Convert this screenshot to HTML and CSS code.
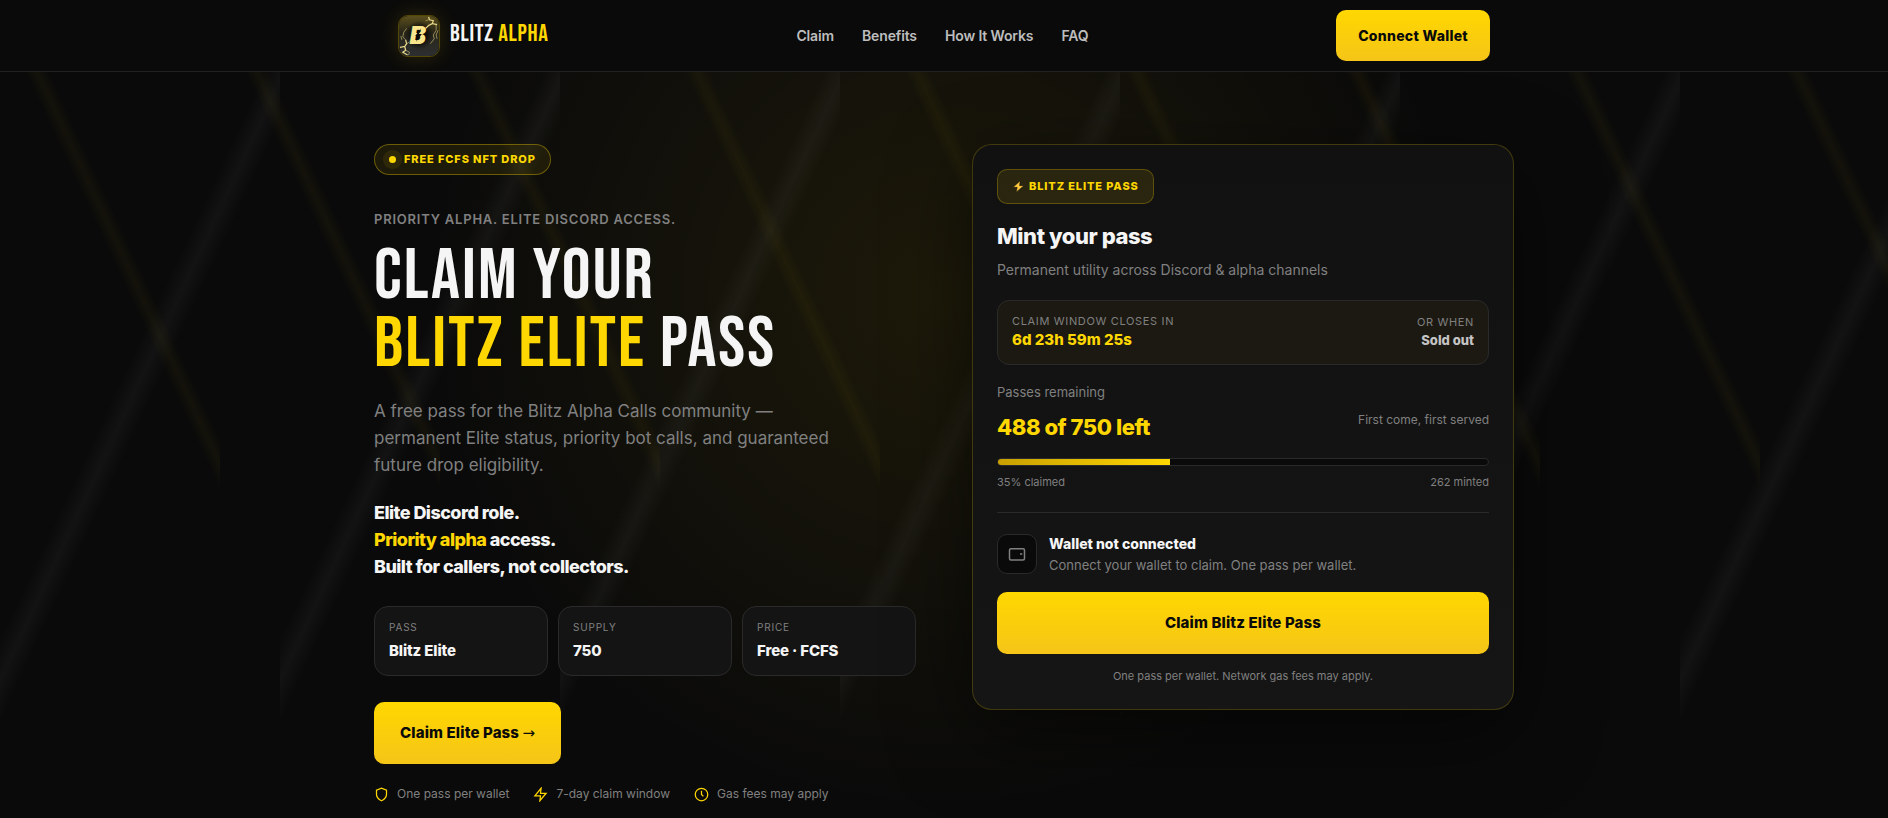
FILE: index.html
```html
<!DOCTYPE html>
<html lang="en">
<head>
    <meta charset="UTF-8">
    <meta name="viewport" content="width=device-width, initial-scale=1.0">
    <title>Blitz Alpha</title>
    <link rel="stylesheet" href="styles.css">
</head>
<body>
    <header class="site-header">
        <div class="header-inner">
            <a href="#" class="brand">
                <svg class="brand-logo" viewBox="0 0 42 42" aria-hidden="true">
                    <defs>
                        <linearGradient id="logoBg" x1="0" y1="0" x2="0" y2="1">
                            <stop offset="0" stop-color="#5a4f1c"/>
                            <stop offset="0.4" stop-color="#2a2719"/>
                            <stop offset="1" stop-color="#2c2e30"/>
                        </linearGradient>
                        <radialGradient id="logoShade">
                            <stop offset="0.4" stop-color="#080808"/>
                            <stop offset="1" stop-color="#080808" stop-opacity="0"/>
                        </radialGradient>
                    </defs>
                    <rect width="42" height="42" fill="url(#logoBg)"/>
                    <circle cx="21" cy="20" r="15" fill="url(#logoShade)"/>
                    <g fill="none" stroke="#e8d98a" stroke-width="0.8">
                        <path stroke-width="1.3" d="M31 1l1 3 4 1-1 3 5 1M35 8l-4 2-3 3"/>
                        <path opacity="0.7" d="M39 9v6l-3 5 1 4-4 5M41 15l-2 5 1 4M31 4l-3 1"/>
                        <path stroke-width="1.3" d="M1 33l5-1 1 4-3 2 5 3M6 32l2-3-1-4"/>
                        <path opacity="0.7" d="M7 25l-3-3 1-5 3-4M7 30l4-3M3 25l-1-4M7 36l4 2-1 3"/>
                    </g>
                    <text x="11" y="29" class="logo-letter">B</text>
                    <path d="M23 13l-6 8h3l-2 6 6-8h-3z" fill="#0b0b0b"/>
                </svg>
                <span class="brand-name">BLITZ <span class="gold">ALPHA</span></span>
            </a>
            <nav class="nav">
                <a href="#claim">Claim</a>
                <a href="#benefits">Benefits</a>
                <a href="#how">How It Works</a>
                <a href="#faq">FAQ</a>
            </nav>
            <button class="btn btn-small" type="button">Connect Wallet</button>
        </div>
    </header>

    <main class="hero">
        <section class="intro">
            <div class="badge"><span class="badge-dot"></span>FREE FCFS NFT DROP</div>
            <p class="eyebrow">PRIORITY ALPHA. ELITE DISCORD ACCESS.</p>
            <h1>CLAIM YOUR<br><span class="gold">BLITZ ELITE</span> PASS</h1>
            <p class="lead">A free pass for the Blitz Alpha Calls community — permanent Elite status, priority bot calls, and guaranteed future drop eligibility.</p>
            <p class="tagline">Elite Discord role.<br><span class="gold">Priority alpha</span> access.<br>Built for callers, not collectors.</p>

            <dl class="stats">
                <div class="stat">
                    <dt>PASS</dt>
                    <dd>Blitz Elite</dd>
                </div>
                <div class="stat">
                    <dt>SUPPLY</dt>
                    <dd>750</dd>
                </div>
                <div class="stat">
                    <dt>PRICE</dt>
                    <dd>Free · FCFS</dd>
                </div>
            </dl>

            <a href="#claim" class="btn btn-large">Claim Elite Pass <span class="arrow">→</span></a>

            <ul class="trust">
                <li>
                    <svg viewBox="0 0 24 24"><path d="M12 22s8-4 8-10V5l-8-3-8 3v7c0 6 8 10 8 10z"/></svg>
                    One pass per wallet
                </li>
                <li>
                    <svg viewBox="0 0 24 24"><path d="M13 2L3 14h9l-1 8 10-12h-9l1-8z"/></svg>
                    7-day claim window
                </li>
                <li>
                    <svg viewBox="0 0 24 24"><circle cx="12" cy="12" r="10"/><path d="M12 6v6l3 3"/></svg>
                    Gas fees may apply
                </li>
            </ul>
        </section>

        <section class="mint-card" id="claim">
            <div class="pass-badge">
                <svg viewBox="0 0 12 12"><path d="M7.500.8L1 6.800h3.800L3.800 11.200 11 5.200H7z"/></svg>
                BLITZ ELITE PASS
            </div>
            <h2>Mint your pass</h2>
            <p class="mint-sub">Permanent utility across Discord &amp; alpha channels</p>

            <div class="timer">
                <div>
                    <div class="timer-label">CLAIM WINDOW CLOSES IN</div>
                    <div class="timer-value gold">6d 23h 59m 25s</div>
                </div>
                <div class="timer-end">
                    <div class="timer-label">OR WHEN</div>
                    <div class="timer-sold">Sold out</div>
                </div>
            </div>

            <div class="supply-label">Passes remaining</div>
            <div class="supply-row">
                <strong class="gold">488 of 750 left</strong>
                <span>First come, first served</span>
            </div>
            <div class="progress"><div class="progress-fill" style="width: 35%"></div></div>
            <div class="progress-meta">
                <span>35% claimed</span>
                <span>262 minted</span>
            </div>

            <div class="wallet">
                <div class="wallet-icon">
                    <svg viewBox="0 0 24 24"><rect x="2" y="5" width="20" height="15" rx="2"/><path d="M16 12h3"/></svg>
                </div>
                <div>
                    <div class="wallet-title">Wallet not connected</div>
                    <div class="wallet-text">Connect your wallet to claim. One pass per wallet.</div>
                </div>
            </div>

            <button class="btn btn-large btn-block" type="button">Claim Blitz Elite Pass</button>
            <p class="fine-print">One pass per wallet. Network gas fees may apply.</p>
        </section>
    </main>
</body>
</html>
```
FILE: styles.css
```css
* {
    box-sizing: border-box;
    margin: 0;
    padding: 0;
}
body {
    min-height: 100vh;
    font-family: Inter, "Liberation Sans", sans-serif;
    font-size: 14px;
    line-height: 20px;
    color: #f5f5f5;
    background-color: #0a0a0a;
    background-image:
        linear-gradient(115deg, transparent 45%, rgba(255, 255, 255, 0.035) 48%, transparent 51%),
        linear-gradient(65deg, transparent 62%, rgba(255, 215, 0, 0.04) 64%, transparent 66%),
        radial-gradient(circle 520px at 50% 36%, rgba(255, 215, 0, 0.08), transparent);
    background-size: 280px 100vh, 220px 100vh, 100% 100vh;
}
a {
    color: inherit;
    text-decoration: none;
}
.gold {
    color: #ffd700;
}

/* Header */
.site-header {
    border-bottom: 1px solid #222;
    background: rgba(10, 10, 10, 0.97);
}
.header-inner {
    max-width: 1140px;
    margin: 0 auto;
    padding: 10px 24px;
    display: flex;
    align-items: center;
    justify-content: space-between;
}
.brand {
    display: flex;
    align-items: center;
    gap: 10px;
}
.brand-logo {
    width: 42px;
    height: 42px;
    border: 1px solid rgba(255, 215, 0, 0.3);
    border-radius: 10px;
    box-shadow: 0 0 20px rgba(255, 215, 0, 0.15);
}
.logo-letter {
    font: italic 900 26px Inter, sans-serif;
    fill: #f8e58c;
}
.brand-name {
    padding-bottom: 4px;
    font-family: "Bebas Neue", "Liberation Sans", sans-serif;
    font-size: 24px;
    line-height: 24px;
    letter-spacing: 0.03em;
}
.nav {
    display: flex;
    gap: 28px;
    font-weight: 600;
    letter-spacing: -0.01em;
    color: #bdbdbd;
}
.btn {
    display: inline-block;
    border: 0;
    border-radius: 10px;
    background: linear-gradient(#ffd700, #f5c518);
    color: #0a0a0a;
    font-family: inherit;
    font-weight: 800;
    text-align: center;
    cursor: pointer;
}
.btn-small {
    padding: 15px 22px;
    font-size: 14px;
    line-height: 21px;
    letter-spacing: 0.02em;
}
.btn-large {
    padding: 19px 26px;
    font-size: 15px;
    line-height: 24px;
    letter-spacing: 0.01em;
}
.btn-block {
    width: 100%;
}
.arrow {
    font-family: "DejaVu Sans", sans-serif;
    font-weight: 400;
}

/* Hero */
.hero {
    max-width: 1188px;
    margin: 0 auto;
    padding: 72px 24px 12px;
    display: grid;
    grid-template-columns: 1fr 1fr;
    gap: 56px;
    align-items: start;
}
.badge {
    width: fit-content;
    display: flex;
    align-items: center;
    gap: 8px;
    padding: 7px 14px;
    border: 1px solid rgba(255, 215, 0, 0.35);
    border-radius: 16px;
    background: rgba(255, 215, 0, 0.08);
    color: #ffd700;
    font-size: 11px;
    line-height: 15px;
    font-weight: 800;
    letter-spacing: 0.08em;
}
.badge-dot {
    width: 7px;
    height: 7px;
    border-radius: 50%;
    background: #ffd700;
    box-shadow: 0 0 0 6px rgba(255, 215, 0, 0.08);
}
.eyebrow {
    margin-top: 34px;
    font-size: 13px;
    font-weight: 600;
    letter-spacing: 0.06em;
    color: #808080;
}
h1 {
    margin: 14px 0 19px;
    font-family: "Bebas Neue", "Liberation Sans", sans-serif;
    font-size: 72px;
    line-height: 68px;
    font-weight: 400;
    letter-spacing: 0.03em;
}
.lead {
    max-width: 480px;
    font-size: 17px;
    line-height: 27px;
    color: #808080;
}
.tagline {
    margin-top: 20px;
    font-size: 18px;
    line-height: 27px;
    font-weight: 800;
    letter-spacing: -0.03em;
}
.stats {
    margin: 26px 0;
    display: grid;
    grid-template-columns: repeat(3, 1fr);
    gap: 10px;
}
.stat {
    padding: 12px 14px;
    border: 1px solid #2a2a2a;
    border-radius: 14px;
    background: #141414;
}
.stat dt {
    font-size: 10px;
    line-height: 16px;
    letter-spacing: 0.08em;
    color: #808080;
}
.stat dd {
    margin-top: 4px;
    font-size: 15px;
    line-height: 24px;
    font-weight: 800;
    letter-spacing: -0.01em;
}
.trust {
    margin-top: 20px;
    display: flex;
    gap: 24px;
    list-style: none;
    font-size: 12px;
    color: #808080;
}
.trust li {
    display: flex;
    align-items: center;
    gap: 8px;
}
.trust svg {
    width: 15px;
    height: 15px;
    fill: none;
    stroke: #ffd700;
    stroke-width: 2;
}

/* Mint card */
.mint-card {
    padding: 24px;
    border: 1px solid rgba(255, 215, 0, 0.2);
    border-radius: 20px;
    background: linear-gradient(#111, #151515);
    box-shadow: 0 24px 80px rgba(0, 0, 0, 0.5);
}
.pass-badge {
    width: fit-content;
    display: flex;
    align-items: center;
    gap: 4px;
    padding: 8px 14px;
    border: 1px solid rgba(255, 215, 0, 0.25);
    border-radius: 10px;
    background: rgba(255, 215, 0, 0.1);
    color: #ffd700;
    font-size: 11px;
    line-height: 17px;
    font-weight: 800;
    letter-spacing: 0.08em;
}
.pass-badge svg {
    width: 13px;
    height: 13px;
    fill: #ffc83d;
    stroke: #111;
    stroke-width: 0.5;
}
h2 {
    margin-top: 14px;
    font-size: 22px;
    line-height: 36px;
    font-weight: 800;
    letter-spacing: -0.02em;
}
.mint-sub {
    margin-top: 4px;
    line-height: 24px;
    color: #808080;
}
.timer {
    margin: 18px 0 17px;
    padding: 11px 14px 14px;
    display: flex;
    align-items: center;
    justify-content: space-between;
    border: 1px solid #2a2a2a;
    border-radius: 12px;
    background: #1c1912;
}
.timer-label {
    font-size: 11px;
    line-height: 18px;
    letter-spacing: 0.06em;
    color: #808080;
}
.timer-value {
    font-size: 15px;
    line-height: 20px;
    font-weight: 800;
}
.timer-end {
    text-align: right;
}
.timer-sold {
    font-size: 13px;
    line-height: 18px;
    font-weight: 800;
    color: #c4c4c4;
}
.supply-label {
    font-size: 13px;
    color: #808080;
}
.supply-row {
    margin-top: 8px;
    display: flex;
    justify-content: space-between;
    font-size: 12px;
    color: #808080;
}
.supply-row strong {
    font-size: 22px;
    line-height: 34px;
    font-weight: 800;
    letter-spacing: -0.02em;
}
.progress {
    margin-top: 14px;
    height: 8px;
    overflow: hidden;
    border: 1px solid #2a2a2a;
    border-radius: 4px;
    background: #0a0a0a;
}
.progress-fill {
    height: 100%;
    background: linear-gradient(90deg, #c9a000, #ffd700);
}
.progress-meta {
    margin-top: 6px;
    padding-bottom: 20px;
    display: flex;
    justify-content: space-between;
    border-bottom: 1px solid #2a2a2a;
    font-size: 11px;
    color: #808080;
}
.wallet {
    margin: 20px 0 17px;
    display: flex;
    align-items: center;
    gap: 12px;
}
.wallet-icon {
    width: 40px;
    height: 40px;
    display: grid;
    place-items: center;
    border: 1px solid #2a2a2a;
    border-radius: 10px;
    background: #0a0a0a;
}
.wallet-icon svg {
    width: 18px;
    height: 18px;
    fill: none;
    stroke: #808080;
    stroke-width: 2;
}
.wallet-title {
    font-size: 14px;
    line-height: 22px;
    font-weight: 800;
}
.wallet-text {
    font-size: 13px;
    color: #808080;
}
.fine-print {
    margin-top: 13px;
    font-size: 11px;
    line-height: 18px;
    text-align: center;
    color: #808080;
}
```
